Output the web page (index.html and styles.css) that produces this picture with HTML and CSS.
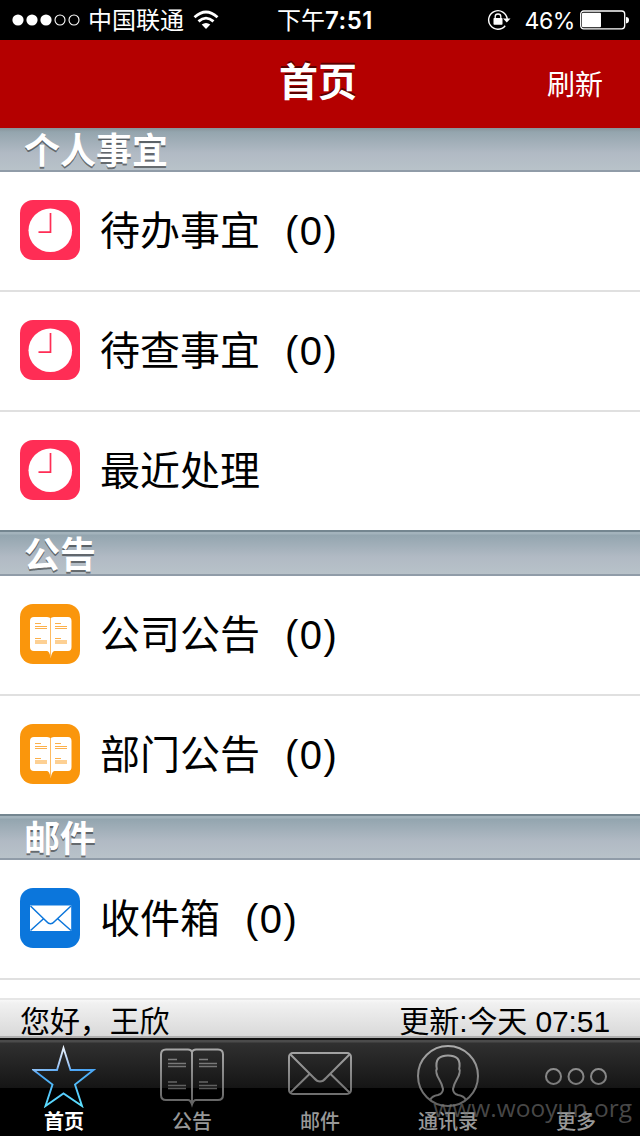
FILE: index.html
```html
<!DOCTYPE html>
<html lang="zh-CN">
<head>
  <meta charset="UTF-8">
  <meta name="viewport" content="width=device-width, initial-scale=1.0">
  <title>首页</title>
  <link rel="stylesheet" href="styles.css">
</head>
<body>
  <!-- shared shapes -->
  <svg class="defs" width="0" height="0">
    <defs>
      <linearGradient id="gray" gradientUnits="userSpaceOnUse" x1="0" y1="4" x2="0" y2="66">
        <stop offset="0" stop-color="#b0b0b0"/>
        <stop offset="1" stop-color="#626262"/>
      </linearGradient>
      <linearGradient id="blue" gradientUnits="userSpaceOnUse" x1="30" y1="4" x2="36" y2="68">
        <stop offset="0" stop-color="#ffffff"/>
        <stop offset="0.36" stop-color="#a5c9f6"/>
        <stop offset="0.46" stop-color="#4aa5f6"/>
        <stop offset="1" stop-color="#5ce0ff"/>
      </linearGradient>
      <symbol id="clock" viewBox="0 0 60 60">
        <rect width="60" height="60" rx="13" fill="#ff2d55"/>
        <circle cx="30.3" cy="30.3" r="21.8" fill="#fff"/>
        <path d="M30.5 13V32.2H18.5" fill="none" stroke="#ff2d55" stroke-width="1.7"/>
      </symbol>
      <symbol id="book" viewBox="0 0 60 60">
        <rect width="60" height="60" rx="13" fill="#fa960c"/>
        <path d="M14 13H27Q30 13 30.5 14.5Q31 13 34 13H48Q51.5 13 51.5 17V43Q51.5 47 48 47H34.5Q32 47 30.7 54Q29.500 47 27 47H14Q10 47 10 43V17Q10 13 14 13Z" fill="#fff"/>
        <path d="M30.500 14V53" stroke="#fdbb61" stroke-width="1"/>
        <path d="M15 19.500H21M15 22.500H27M15 24.500H27M35 19.500H41M35 22.500H47M35 24.500H47M15 34.500H21M35 34.500H41" stroke="#fcb04b" stroke-width="1"/>
        <path d="M15 38H27M35 38H47" stroke="#fdd093" stroke-width="4"/>
      </symbol>
      <symbol id="mail" viewBox="0 0 60 60">
        <rect width="60" height="60" rx="13" fill="#0b76dc"/>
        <rect x="10" y="17.500" width="41.200" height="25.500" fill="#fff"/>
        <path d="M10.500 18L26.500 33.500Q30.500 38 34.500 33.500L51 18M10.500 42.500L23.500 30.800M51 42.500L37.700 30.800" fill="none" stroke="#0b76dc" stroke-width="1.500"/>
      </symbol>
    </defs>
  </svg>

  <div class="status">
    <div class="status-left">
      <svg width="68" height="14" viewBox="0 0 68 14">
        <g fill="#fff"><circle cx="6" cy="7" r="5.600"/><circle cx="20" cy="7" r="5.600"/><circle cx="34" cy="7" r="5.600"/></g>
        <g fill="none" stroke="#fff" stroke-width="1.100"><circle cx="48" cy="7" r="5"/><circle cx="62" cy="7" r="5"/></g>
      </svg>
      <span class="carrier">中国联通</span>
      <svg width="26" height="20" viewBox="0 0 26 20">
        <g fill="none" stroke="#fff" stroke-width="2.800"><path d="M1.500 7.200Q13 -3.200 24.500 7.200"/><path d="M5.500 11.400Q13 4.800 20.500 11.400"/></g>
        <path d="M8.700 14.600Q13 11.200 17.300 14.600L13 19Z" fill="#fff"/>
      </svg>
    </div>
    <div class="clock">下午<b>7:51</b></div>
    <div class="status-right">
      <svg width="24" height="22" viewBox="0 0 24 22">
        <path d="M18.200 16.800A9.300 9.300 0 1 1 20.200 10" fill="none" stroke="#fff" stroke-width="1.400"/>
        <path d="M16 9.500H23.500L19.800 13.500Z" fill="#fff"/>
        <rect x="6.500" y="9" width="9" height="6.800" rx="0.700" fill="#fff"/>
        <path d="M8.200 9.500V7.500Q8.200 5 11 5T13.800 7.500V9.500" fill="none" stroke="#fff" stroke-width="1.300"/>
      </svg>
      <span class="percent">46%</span>
      <svg width="50" height="20" viewBox="0 0 50 20">
        <rect x="0.700" y="1" width="44" height="17.800" rx="3" fill="none" stroke="#fff" stroke-width="1.300"/>
        <rect x="2" y="2.800" width="19" height="14.500" rx="1" fill="#fff"/>
        <path d="M46 7Q49 7 49 10T46 13.500Z" fill="#fff"/>
      </svg>
    </div>
  </div>

  <div class="navbar">
    <h1>首页</h1>
    <span class="refresh">刷新</span>
  </div>

  <div class="list">
    <h2 class="section first">个人事宜</h2>
    <div class="row"><svg class="icon"><use href="#clock"/></svg><span>待办事宜<span class="count">(0)</span></span></div>
    <div class="row"><svg class="icon"><use href="#clock"/></svg><span>待查事宜<span class="count">(0)</span></span></div>
    <div class="row last"><svg class="icon"><use href="#clock"/></svg><span>最近处理</span></div>

    <h2 class="section">公告</h2>
    <div class="row"><svg class="icon"><use href="#book"/></svg><span>公司公告<span class="count">(0)</span></span></div>
    <div class="row last"><svg class="icon"><use href="#book"/></svg><span>部门公告<span class="count">(0)</span></span></div>

    <h2 class="section">邮件</h2>
    <div class="row"><svg class="icon"><use href="#mail"/></svg><span>收件箱<span class="count">(0)</span></span></div>
  </div>

  <div class="toolbar">
    <span>您好，王欣</span>
    <span>更新:今天 07:51</span>
  </div>

  <div class="tabbar">
    <div class="tab active">
      <svg width="64" height="70" viewBox="0 0 64 70" fill="none" stroke="url(#blue)" stroke-width="1.900">
        <path d="M31.500 10L38.500 32H61.500L43 46.500L50 68L31.500 55.500L13.500 68L20.500 46.500L1.500 32H25Z"/>
      </svg>
      <span>首页</span>
    </div>
    <div class="tab">
      <svg width="64" height="70" viewBox="0 0 64 70" fill="none" stroke="url(#gray)" stroke-width="2">
        <path d="M6 11.500H28Q31 11.500 32 14Q33 11.500 36 11.500H58Q63 11.500 63 16.500V57Q63 62 58 62H36Q33.500 62 32 66.500Q30.500 62 28 62H6Q1 62 1 57V16.500Q1 11.500 6 11.500ZM32 14V66"/>
        <path d="M8 21.500H17M8 25.500H26M8 28.500H26M39 21.500H48M39 25.500H57M39 28.500H57M8 44H17M8 47.500H26M8 50.500H26M39 44H48M39 47.500H57M39 50.500H57" stroke-width="1.300" opacity="0.750"/>
      </svg>
      <span>公告</span>
    </div>
    <div class="tab">
      <svg width="64" height="70" viewBox="0 0 64 70" fill="none" stroke="url(#gray)" stroke-width="2">
        <rect x="1" y="15" width="62" height="41" rx="4"/>
        <path d="M2.500 16.500L26 40Q32 47 38 40L61.500 16.500M2.500 54.500L21.500 36M61.500 54.500L42.500 36"/>
      </svg>
      <span>邮件</span>
    </div>
    <div class="tab">
      <svg width="64" height="70" viewBox="0 0 64 70" fill="none" stroke="url(#gray)" stroke-width="2">
        <circle cx="32" cy="38" r="30"/>
        <path d="M14.500 61.500Q16 58 22 57Q27 55.500 27 51Q26 46 23 41Q21 38 20.500 35Q19.500 32.500 20.800 31Q19.500 24 22.500 20.500Q26 17.500 32 17.500T41.500 20.500Q44.500 24 43.200 31Q44.500 32.500 43.500 35Q43 38 41 41Q38 46 37 51Q37 55.500 42 57Q48 58 49.500 61.500"/>
      </svg>
      <span>通讯录</span>
    </div>
    <div class="tab">
      <svg width="64" height="70" viewBox="0 0 64 70" fill="none" stroke="url(#gray)" stroke-width="2">
        <circle cx="9.500" cy="38.500" r="7.500"/>
        <circle cx="32" cy="38.500" r="7.500"/>
        <circle cx="54.500" cy="38.500" r="7.500"/>
      </svg>
      <span>更多</span>
    </div>
    <div class="watermark">www.wooyun.org</div>
  </div>
</body>
</html>
```
FILE: styles.css
```css
* {
  box-sizing: border-box;
}
body {
  margin: 0;
  width: 640px;
  height: 1136px;
  display: flex;
  flex-direction: column;
  overflow: hidden;
  background: #fff;
  color: #000;
  font-family: "Liberation Sans", "Noto Sans CJK SC", sans-serif;
}
svg {
  display: block;
  flex: none;
}
.defs {
  position: absolute;
}
.status {
  height: 40px;
  flex: none;
  display: grid;
  grid-template-columns: 1fr auto 1fr;
  align-items: center;
  padding: 0 10px 0 12px;
  background: #000;
  color: #fff;
  font: 24px/38px Inter, "Noto Sans CJK SC", sans-serif;
}
.status-left,
.status-right {
  display: flex;
  align-items: center;
}
.carrier {
  margin: 0 9px 0 8px;
  padding-top: 2px;
}
.status-right {
  justify-content: flex-end;
}
.clock {
  padding: 2px 0 0 8px;
}
.clock b {
  font-weight: 600;
  letter-spacing: 0.5px;
}
.percent {
  margin: 0 5px 0 13px;
  padding-top: 2px;
  font-size: 23px;
  letter-spacing: -0.4px;
}
.navbar {
  height: 88px;
  flex: none;
  display: grid;
  grid-template-columns: 1fr auto 1fr;
  background: #b40000;
  color: #fff;
}
.navbar h1 {
  grid-column: 2;
  margin: 0;
  padding-right: 4px;
  font-size: 39px;
  line-height: 85px;
  text-shadow: 0 -2px 0 rgba(0, 0, 0, 0.5);
}
.refresh {
  justify-self: end;
  padding-right: 37px;
  font-size: 28px;
  line-height: 92px;
}
.list {
  flex: 1;
  min-height: 0;
}
.section {
  height: 46px;
  margin: 0;
  padding-left: 24px;
  border-top: 2px solid #748690;
  border-bottom: 2px solid #909ca8;
  background: linear-gradient(#a3b3bc 0, #a3b3bc 2px, #93a5af 3px, #b1bac4 60%, #b8c2c9 100%);
  color: #fff;
  font-size: 36px;
  line-height: 47px;
  text-shadow: 0 2px 0 rgba(0, 0, 0, 0.45);
}
.section.first {
  height: 44px;
  border-top: 0;
  background: linear-gradient(#87949a 0, #94a5ae 4px, #b1bac4 60%, #b8c2c9 100%);
}
.row {
  height: 120px;
  display: flex;
  align-items: center;
  gap: 20px;
  padding: 0 0 2px 20px;
  border-bottom: 2px solid #e0e0e0;
  font-size: 40px;
  line-height: 60px;
}
.row.last {
  height: 118px;
  border-bottom: 0;
}
.row > span {
  padding-top: 2px;
}
.icon {
  width: 60px;
  height: 60px;
}
.count {
  margin-left: 25px;
  letter-spacing: 1.5px;
}
.toolbar {
  height: 40px;
  flex: none;
  display: flex;
  justify-content: space-between;
  padding: 0 30px 0 20px;
  border-top: 2px solid #e6e6e6;
  border-bottom: 2px solid #b0b0b0;
  background: linear-gradient(#f8f8f8, #f1f1f1 3px, #d9d9d9);
  font-size: 30px;
  line-height: 44px;
  letter-spacing: -0.1px;
}
.tabbar {
  position: relative;
  height: 98px;
  flex: none;
  display: flex;
  border-top: 2px solid #111;
  background: linear-gradient(#4b4b4b 0, #4b4b4b 2px, #303030 3px, #151515 48px, #000 48px);
}
.tab {
  flex: 1;
  display: flex;
  flex-direction: column;
  align-items: center;
  color: #989898;
  font-size: 20px;
  font-weight: 500;
  line-height: 28px;
}
.tab svg {
  margin-top: -2px;
}
.tab.active {
  color: #fff;
  font-weight: bold;
}
.watermark {
  position: absolute;
  right: 8px;
  bottom: 11px;
  color: rgba(120, 120, 120, 0.6);
  font: 24.5px/34px "Open Sans", sans-serif;
}
```
